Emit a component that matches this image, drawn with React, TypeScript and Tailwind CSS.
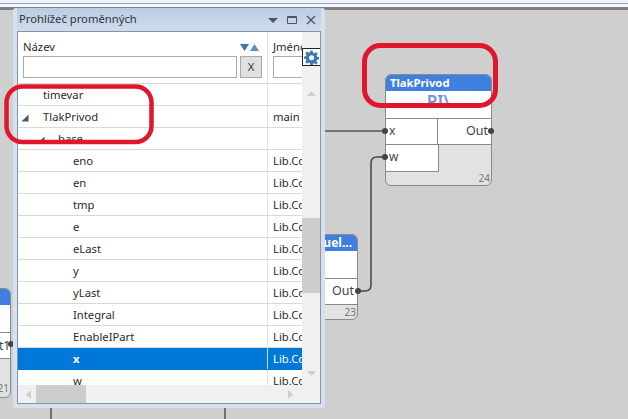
const rows: [string, number, string, boolean?][] = [
  ["timevar", 25, ""],
  ["TlakPrivod", 25, "main"],
  ["base", 40, ""],
  ["eno", 55, "Lib.Co"],
  ["en", 55, "Lib.Co"],
  ["tmp", 55, "Lib.Co"],
  ["e", 55, "Lib.Co"],
  ["eLast", 55, "Lib.Co"],
  ["y", 55, "Lib.Co"],
  ["yLast", 55, "Lib.Co"],
  ["Integral", 55, "Lib.Co"],
  ["EnableIPart", 55, "Lib.Co"],
  ["x", 55, "Lib.Co", true],
  ["w", 55, "Lib.Co"],
];

function Row({ name, indent, type, selected }: { name: string; indent: number; type: string; selected?: boolean }) {
  const arrow = name === "TlakPrivod" ? 3 : name === "base" ? 19 : -1;
  return (
    <div className={`relative flex h-[22px] shrink-0 border-b ${selected ? "border-[#0078d7] bg-[#0078d7] font-bold text-white" : "border-[#d9d9d9] text-[#2b2b2b]"}`}>
      <div className="relative h-full w-[249px] shrink-0 truncate leading-[21px]" style={{ paddingLeft: indent }}>
        {arrow >= 0 && (
          <svg className="absolute top-[8px]" style={{ left: arrow }} width="8" height="8" viewBox="0 0 8 8">
            <path d="M7.5 .5V7.5H.5Z" fill="#555" />
          </svg>
        )}
        {name}
      </div>
      <div className={`h-full flex-1 overflow-hidden whitespace-nowrap border-l pl-[5px] leading-[21px] ${selected ? "border-[#d9d9d9] font-normal" : "border-[#e2e2e2]"}`}>{type}</div>
    </div>
  );
}

function Port({ label, right }: { label: string; right?: boolean }) {
  return <span className={`absolute top-[6px] ${right ? "right-[3px] text-[12.5px]" : "left-[3px] text-[12px]"} leading-none`}>{label}</span>;
}

export default function App() {
  return (
    <div className="relative h-[419px] w-[628px] overflow-hidden bg-[#cfcfcf] font-['Noto_Sans','Open_Sans',sans-serif] text-[11.25px]">
      <div className="h-[3px] bg-[#eef2fb]" />
      <div className="h-[1px] bg-[#9aa6c0]" />
      <div className="h-[3px] bg-[#f4f6fc]" />
      <div className="h-[3px] bg-[#7d7d82]" />

      {/* Wires */}
      <svg className="absolute left-0 top-0" width="628" height="419" viewBox="0 0 628 419" fill="none">
        <path d="M320 131H385" stroke="#555" strokeWidth="1.5" />
        <path d="M358 291H365Q371 291 371 285V163Q371 157 377 157H385" stroke="#444" strokeWidth="1.5" />
        <path d="M51 405V419M225 405V419" stroke="#333" strokeWidth="1.2" />
      </svg>

      {/* Node 21 */}
      <div className="absolute left-[-60px] top-[288px] h-[110px] w-[71px] overflow-hidden rounded-[6px] border border-[#8a8a8a] bg-[#e2e2e2]">
        <div className="h-[16px] bg-[#3f7fdd]" />
        <div className="h-[27px] bg-white" />
        <div className="h-[27px] border-y border-[#8a8a8a] bg-white" />
        <span className="absolute bottom-[1px] right-[1px] text-[10px] text-[#777]">21</span>
      </div>
      <div className="absolute left-[-1px] top-[337px] text-[12px] text-[#444]">t1</div>
      <div className="absolute left-[8px] top-[341px] h-[6px] w-[6px] rounded-full bg-[#444]" />

      {/* Node 23 */}
      <div className="absolute left-[280px] top-[234px] h-[86px] w-[78px] overflow-hidden rounded-[6px] border border-[#8a8a8a] bg-[#e2e2e2]">
        <div className="flex h-[16px] justify-end bg-[#3f7fdd] pr-[5px] text-[12px] font-bold leading-[16px] text-white">uel...</div>
        <div className="h-[27px] bg-white" />
        <div className="relative h-[27px] border-y border-[#8a8a8a] bg-white text-[#444]"><Port label="Out" right /></div>
        <span className="absolute bottom-[1px] right-[1px] text-[10px] leading-[12px] text-[#777]">23</span>
      </div>
      <div className="absolute left-[355px] top-[288px] h-[6px] w-[6px] rounded-full bg-[#444]" />

      {/* Node 24 */}
      <div className="absolute left-[385px] top-[74px] h-[112px] w-[107px] overflow-hidden rounded-[6px] border border-[#8a8a8a] bg-[#e2e2e2]">
        <div className="h-[16px] bg-[#3f7fdd] pl-[4px] text-[11.25px] font-bold leading-[16px] text-white">TlakPrivod</div>
        <div className="h-[27px] bg-white text-center text-[17px] font-semibold leading-[22px] text-[#6f93e0]">PI\</div>
        <div className="flex h-[27px] border-y border-[#8a8a8a] text-[#444]">
          <div className="relative w-[52px] border-r border-[#8a8a8a] bg-white"><Port label="x" /></div>
          <div className="relative flex-1 bg-white"><Port label="Out" right /></div>
        </div>
        <div className="relative h-[27px] w-[53px] border-r border-b border-[#8a8a8a] bg-white text-[#444]"><Port label="w" /></div>
        <span className="absolute bottom-[1px] right-[1px] text-[10px] leading-[12px] text-[#777]">24</span>
      </div>
      <div className="absolute left-[382px] top-[128px] h-[6px] w-[6px] rounded-full bg-[#444]" />
      <div className="absolute left-[488px] top-[128px] h-[6px] w-[6px] rounded-full bg-[#444]" />
      <div className="absolute left-[382px] top-[154px] h-[6px] w-[6px] rounded-full bg-[#444]" />

      {/* Floating window */}
      <div className="absolute left-[13px] top-[8px] flex h-[400px] w-[312px] flex-col rounded-[3px] bg-[#d6e0ef] px-[4px] pb-[4px]">
        <div className="flex h-[23px] shrink-0 items-center justify-between bg-gradient-to-b from-[#b9cde6] to-[#d0dcec] pl-[2px] pr-[5px] text-[#333]">
          <span>Prohlížeč proměnných</span>
          <div className="flex items-center gap-[9px] text-[#555]">
            <svg width="10" height="10" viewBox="0 0 10 10"><path d="M0 3H10L5 8Z" fill="#555" /></svg>
            <svg width="10" height="10" viewBox="0 0 10 10" fill="none" stroke="#555"><path d="M.5 1.5H9.5V8.5H.5Z" /><path d="M.5 2H9.5" strokeWidth="2" /></svg>
            <svg width="10" height="10" viewBox="0 0 10 10" fill="none" stroke="#555" strokeWidth="1.4"><path d="M1 1L9 9M9 1L1 9" /></svg>
          </div>
        </div>

        <div className="relative flex min-h-0 flex-1 flex-col overflow-hidden border border-[#8496ae] bg-white">
          <div className="flex min-h-0 flex-1">
            <div className="flex w-[284px] shrink-0 flex-col overflow-hidden">
              {/* Column header */}
              <div className="flex h-[52px] shrink-0 border-b border-[#d9d9d9]">
                <div className="relative w-[249px] shrink-0 pl-[5px] pt-[7px] text-[#2b2b2b]">
                  <div className="leading-[16px]">Název</div>
                  <svg className="absolute left-[222px] top-[11px]" width="20" height="9" viewBox="0 0 20 9"><path d="M0 1H9L4.5 8Z" fill="#3d78a8" /><path d="M10 8H19L14.5 1Z" fill="#5b93c0" /></svg>
                  <div className="mt-[1px] flex gap-[3px]">
                    <div className="h-[22px] w-[214px] border border-[#aaa] bg-white" />
                    <div className="flex h-[22px] w-[22px] items-center justify-center border border-[#aaa] bg-[#e1e1e1] text-[#333]">X</div>
                  </div>
                </div>
                <div className="w-[35px] overflow-hidden whitespace-nowrap border-l border-[#e2e2e2] pl-[5px] pt-[7px] text-[#2b2b2b]">
                  <div className="leading-[16px]">Jméno</div>
                  <div className="mt-[1px] h-[22px] w-[40px] border border-[#aaa] bg-white" />
                </div>
              </div>
              {/* Rows */}
              <div className="flex min-h-0 flex-1 flex-col overflow-hidden">
                {rows.map(([name, indent, type, selected]) => (
                  <Row key={name} name={name} indent={indent} type={type} selected={selected} />
                ))}
              </div>
            </div>
            {/* Vertical scrollbar */}
            <div className="flex flex-1 flex-col items-center bg-[#f0f0f0] pb-[8px]">
              <svg className="mt-[58px]" width="9" height="6" viewBox="0 0 9 6"><path d="M0 6L4.5 1L9 6Z" fill="#cfcfcf" /></svg>
              <div className="mt-[122px] h-[75px] w-full bg-[#cdcdcd]" />
              <div className="flex-1" />
              <svg width="9" height="6" viewBox="0 0 9 6"><path d="M0 0L4.5 5L9 0Z" fill="#cfcfcf" /></svg>
            </div>
          </div>
          {/* Horizontal scrollbar */}
          <div className="flex h-[18px] shrink-0 items-center bg-[#f0f0f0] pl-[7px]">
            <svg width="6" height="9" viewBox="0 0 6 9"><path d="M6 0L1 4.5L6 9Z" fill="#cfcfcf" /></svg>
            <div className="ml-[5px] h-full w-[50px] bg-[#cdcdcd]" />
            <div className="flex-1" />
            <svg className="mr-[26px]" width="6" height="9" viewBox="0 0 6 9"><path d="M0 0L5 4.5L0 9Z" fill="#cfcfcf" /></svg>
          </div>
          {/* Gear button */}
          <div className="absolute left-[284px] top-[16px] flex h-[18px] w-[18px] items-center justify-center border border-r-0 border-[#222] bg-white">
            <svg width="15" height="15" viewBox="0 0 24 24" fill="#3d78b8">
              <path fillRule="evenodd" d="M10 1h4l.6 3.2 1.9.8 2.7-1.8 2.8 2.8-1.8 2.7.8 1.9L24 11v4l-3.2.6-.8 1.9 1.8 2.7-2.8 2.8-2.7-1.8-1.9.8L14 24h-4l-.6-3.2-1.9-.8-2.7 1.8L2 19l1.8-2.7-.8-1.9L0 13.5v-3l3-.6.8-1.9L2 5.3 4.8 2.5l2.7 1.8 1.9-.8zM12 8.5a4 4 0 100 8 4 4 0 000-8z" />
            </svg>
          </div>
        </div>
      </div>

      {/* Red annotations */}
      <svg className="absolute left-0 top-0" width="628" height="419" viewBox="0 0 628 419" fill="none">
        <rect x="6.5" y="86.5" width="145" height="55.5" rx="16" stroke="#e0162b" strokeWidth="4.5" />
        <rect x="364.5" y="45.5" width="131" height="60" rx="16" stroke="#e0162b" strokeWidth="5" />
      </svg>
    </div>
  );
}
